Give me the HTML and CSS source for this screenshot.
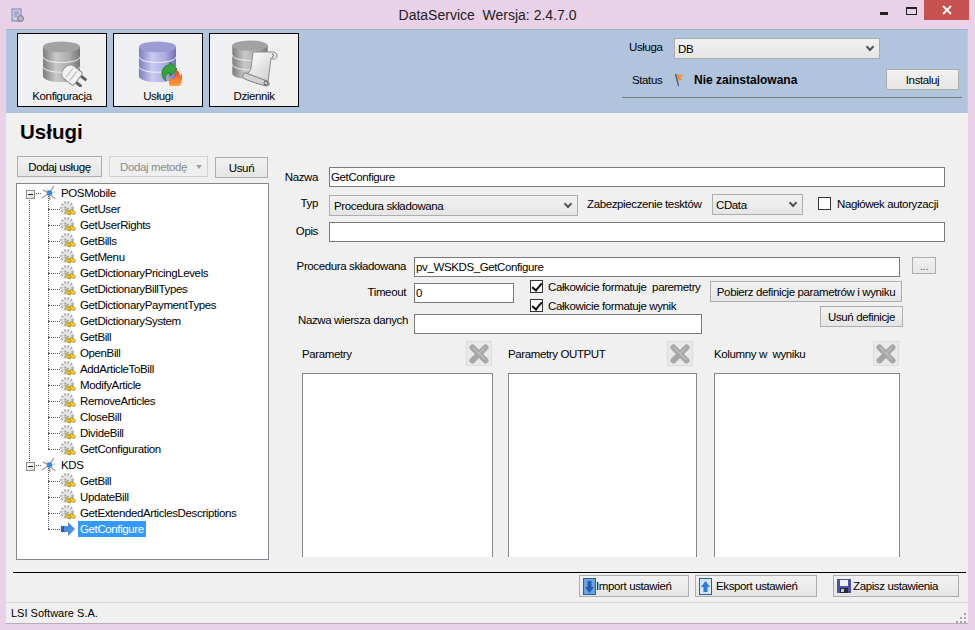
FILE: index.html
```html
<!DOCTYPE html>
<html lang="pl">
<head>
    <meta charset="UTF-8">
    <title>DataService Wersja: 2.4.7.0</title>
    <link rel="stylesheet" href="styles.css">
</head>
<body>
    <svg class="defs" width="0" height="0">
        <defs>
            <linearGradient id="grey" x1="0" x2="1" y1="0" y2="0">
                <stop offset="0" stop-color="#7d7d7d"/>
                <stop offset=".35" stop-color="#c9c9c9"/>
                <stop offset=".7" stop-color="#adadad"/>
                <stop offset="1" stop-color="#767676"/>
            </linearGradient>
            <linearGradient id="violet" x1="0" x2="1" y1="0" y2="0">
                <stop offset="0" stop-color="#7c7cba"/>
                <stop offset=".35" stop-color="#cacaf0"/>
                <stop offset=".7" stop-color="#aeaee0"/>
                <stop offset="1" stop-color="#7272b2"/>
            </linearGradient>
            <linearGradient id="flame" x1="0" x2="0" y1="0" y2="1">
                <stop offset="0" stop-color="#e8401a"/>
                <stop offset="1" stop-color="#ffa23a"/>
            </linearGradient>
            <linearGradient id="paper" x1="0" x2="1" y1="0" y2="1">
                <stop offset="0" stop-color="#ffffff"/>
                <stop offset="1" stop-color="#c9c9c9"/>
            </linearGradient>
            <symbol id="db-grey" viewBox="0 0 40 44">
                <path d="M1 6v30c0 3.500 8 6 19 6s19-2.500 19-6V6z" fill="url(#grey)"/>
                <ellipse cx="20" cy="6" rx="19" ry="5.500" fill="#a2a2a2"/>
                <path d="M1 16c0 3.500 8 6 19 6s19-2.500 19-6M1 26c0 3.500 8 6 19 6s19-2.500 19-6" fill="none" stroke="#f0f0f0" stroke-width="1"/>
            </symbol>
            <symbol id="db-violet" viewBox="0 0 40 44">
                <path d="M1 6v30c0 3.500 8 6 19 6s19-2.500 19-6V6z" fill="url(#violet)"/>
                <ellipse cx="20" cy="6" rx="19" ry="5.500" fill="#9c9cd4"/>
                <path d="M1 16c0 3.500 8 6 19 6s19-2.500 19-6M1 26c0 3.500 8 6 19 6s19-2.500 19-6" fill="none" stroke="#f2f2fd" stroke-width="1"/>
            </symbol>
            <symbol id="gear" viewBox="0 0 16 16">
                <circle cx="7" cy="7" r="5.500" fill="none" stroke="#b0b0b0" stroke-width="3" stroke-dasharray="2 1.200"/>
                <circle cx="7" cy="7" r="4.500" fill="#e2e2e2"/>
                <path d="M4 6l5 2M4 8l3 1" stroke="#9d9d9d" stroke-width="1"/>
                <ellipse cx="8.500" cy="11.500" rx="3.200" ry="1.800" fill="#e9bf22" stroke="#9a7a18" stroke-width=".6" transform="rotate(35 8.500 11.500)"/>
                <ellipse cx="12.500" cy="11" rx="3.200" ry="1.800" fill="#f4cf32" stroke="#9a7a18" stroke-width=".6" transform="rotate(35 12.500 11)"/>
            </symbol>
            <symbol id="node" viewBox="0 0 16 16">
                <path d="M8 8L1 13M8 8L13 1M8 8L2 5M8 8l6 6M8 8l1 7" stroke="#a9a9a9" stroke-width="1.400" fill="none"/>
                <path d="M8 8L5 2M8 8l7-1" stroke="#d8d8d8" stroke-width="1"/>
                <circle cx="8.500" cy="8" r="2.800" fill="#2e8fe8"/>
            </symbol>
            <symbol id="x-icon" viewBox="0 0 20 20">
                <path d="M3.500 3.500l13 13M16.500 3.500l-13 13" fill="none" stroke="#a6a6a6" stroke-width="6" stroke-linecap="round"/>
                <path d="M4 3.500l12 12M16 3.500L10 9.500" fill="none" stroke="#bcbcbc" stroke-width="1.500" stroke-linecap="round"/>
            </symbol>
        </defs>
    </svg>

    <header class="titlebar">
        <svg class="app-icon" width="14" height="15" viewBox="0 0 14 15">
            <rect x="1" y="1" width="9" height="12" fill="#c9cbe6" stroke="#7e83ad"/>
            <path d="M3 4h5M3 6h5M3 8h3" stroke="#7e83ad"/>
            <circle cx="9.500" cy="10.500" r="3" fill="#b4b6c4" stroke="#72758c"/>
        </svg>
        <div class="app-title">DataService &nbsp;Wersja: 2.4.7.0</div>
        <div class="win-controls">
            <span class="win-min"></span>
            <span class="win-max"></span>
            <span class="win-close">
                <svg width="10" height="10" viewBox="0 0 10 10"><path d="M1 1l8 8M9 1l-8 8" stroke="#fff" stroke-width="2"/></svg>
            </span>
        </div>
    </header>

    <div class="window">
        <section class="toolbar">
            <div class="tool-buttons">
                <button class="tool">
                    <svg width="60" height="50" viewBox="0 0 60 50">
                        <use href="#db-grey" x="10" y="4" width="39" height="43"/>
                        <g transform="rotate(38 39 37)">
                            <rect x="46" y="31" width="9" height="3" rx="1" fill="#5f5f5f"/>
                            <rect x="46" y="39" width="9" height="3" rx="1" fill="#5f5f5f"/>
                            <path d="M30 37c0-5 3-8 7-8h9c1 0 2 1 2 2v12c0 1-1 2-2 2h-9c-4 0-7-3-7-8z" fill="#f2f2f2" stroke="#8f8f8f"/>
                            <path d="M37 31v12M42 31v12" stroke="#c2c2c2" stroke-width="1.200"/>
                        </g>
                    </svg>
                    <span>Konfiguracja</span>
                </button>
                <button class="tool">
                    <svg width="60" height="50" viewBox="0 0 60 50">
                        <use href="#db-violet" x="10" y="4" width="39" height="43"/>
                        <path d="M42 49c-2-3-1-7 2-9 0 2 1 2 2 2 2-2 3-6 1-10 4 2 5 5 5 7 1-1 1-2 1-3 2 4 1 9-1 13z" fill="url(#flame)"/>
                        <path d="M38 44c-4-3-5-8-3-12 2-3 4-4 7-4v-3l7 7-7 7v-3c-2 0-3 1-4 2-1 2-1 4 0 6z" fill="#35a53a" stroke="#1a6f24" stroke-width=".8"/>
                    </svg>
                    <span>Usługi</span>
                </button>
                <button class="tool">
                    <svg width="60" height="50" viewBox="0 0 60 50">
                        <use href="#db-grey" x="7" y="3" width="38" height="41"/>
                        <path d="M29 15h20c3 0 4 2 4 4s-2 4-4 3l-2-1-3 24-22-8c3-1 4-3 5-6z" fill="url(#paper)" stroke="#8c8c8c"/>
                        <path d="M48 17c2 0 2 3 0 3" fill="none" stroke="#555"/>
                        <path d="M22 36l21 8c3 1 3 5 0 5-1 0-16-4-22-7-4-2-2-7 1-6z" fill="#d4d4d4" stroke="#7a7a7a"/>
                        <circle cx="42" cy="46" r="2" fill="none" stroke="#555"/>
                    </svg>
                    <span>Dziennik</span>
                </button>
            </div>
            <div class="service-panel">
                <div class="service-row">
                    <label class="service-label">Usługa</label>
                    <div class="combo combo-service">DB<i class="chevron"></i></div>
                </div>
                <div class="status-row">
                    <span class="status-label">Status</span>
                    <svg class="flag" width="10" height="13" viewBox="0 0 10 13">
                        <path d="M1 1l9 1-3 2 1 3-5 1z" fill="#e8954a"/>
                        <path d="M1.500 1l3 12" stroke="#4d5a78" stroke-width="1.300"/>
                    </svg>
                    <strong class="status-value">Nie zainstalowana</strong>
                    <button class="btn btn-install">Instaluj</button>
                </div>
                <div class="service-rule"></div>
            </div>
        </section>

        <main class="content">
            <h1>Usługi</h1>
            <div class="columns">
                <aside class="side">
                    <div class="side-buttons">
                        <button class="btn btn-add">Dodaj usługę</button>
                        <button class="btn btn-method" disabled>Dodaj metodę<i class="caret"></i></button>
                        <button class="btn btn-remove">Usuń</button>
                    </div>
                    <div class="tree">
                        <div class="tree-group">
                            <div class="node root"><i class="plus"></i><svg class="ico"><use href="#node"/></svg><span>POSMobile</span></div>
                            <div class="node"><svg class="ico"><use href="#gear"/></svg><span>GetUser</span></div>
                            <div class="node"><svg class="ico"><use href="#gear"/></svg><span>GetUserRights</span></div>
                            <div class="node"><svg class="ico"><use href="#gear"/></svg><span>GetBills</span></div>
                            <div class="node"><svg class="ico"><use href="#gear"/></svg><span>GetMenu</span></div>
                            <div class="node"><svg class="ico"><use href="#gear"/></svg><span>GetDictionaryPricingLevels</span></div>
                            <div class="node"><svg class="ico"><use href="#gear"/></svg><span>GetDictionaryBillTypes</span></div>
                            <div class="node"><svg class="ico"><use href="#gear"/></svg><span>GetDictionaryPaymentTypes</span></div>
                            <div class="node"><svg class="ico"><use href="#gear"/></svg><span>GetDictionarySystem</span></div>
                            <div class="node"><svg class="ico"><use href="#gear"/></svg><span>GetBill</span></div>
                            <div class="node"><svg class="ico"><use href="#gear"/></svg><span>OpenBill</span></div>
                            <div class="node"><svg class="ico"><use href="#gear"/></svg><span>AddArticleToBill</span></div>
                            <div class="node"><svg class="ico"><use href="#gear"/></svg><span>ModifyArticle</span></div>
                            <div class="node"><svg class="ico"><use href="#gear"/></svg><span>RemoveArticles</span></div>
                            <div class="node"><svg class="ico"><use href="#gear"/></svg><span>CloseBill</span></div>
                            <div class="node"><svg class="ico"><use href="#gear"/></svg><span>DivideBill</span></div>
                            <div class="node last"><svg class="ico"><use href="#gear"/></svg><span>GetConfiguration</span></div>
                        </div>
                        <div class="tree-group group-last">
                            <div class="node root"><i class="plus"></i><svg class="ico"><use href="#node"/></svg><span>KDS</span></div>
                            <div class="node"><svg class="ico"><use href="#gear"/></svg><span>GetBill</span></div>
                            <div class="node"><svg class="ico"><use href="#gear"/></svg><span>UpdateBill</span></div>
                            <div class="node"><svg class="ico"><use href="#gear"/></svg><span>GetExtendedArticlesDescriptions</span></div>
                            <div class="node last selected">
                                <svg class="ico" viewBox="0 0 16 16"><path d="M1 5h7V1l7 7-7 7v-4H1z" fill="#4a8fe0"/><path d="M1 5h3v6H1z" fill="#1f5fb4"/></svg>
                                <span>GetConfigure</span>
                            </div>
                        </div>
                    </div>
                </aside>

                <section class="form">
                    <div class="row row-name">
                        <label class="lbl lbl-name">Nazwa</label>
                        <input class="field field-wide" value="GetConfigure">
                    </div>
                    <div class="row row-type">
                        <label class="lbl lbl-name">Typ</label>
                        <div class="combo combo-type">Procedura składowana<i class="chevron"></i></div>
                        <label class="lbl-security">Zabezpieczenie tesktów</label>
                        <div class="combo combo-cdata">CData<i class="chevron"></i></div>
                        <i class="check check-auth"></i>
                        <label class="lbl-auth">Nagłówek autoryzacji</label>
                    </div>
                    <div class="row row-desc">
                        <label class="lbl lbl-name">Opis</label>
                        <input class="field field-wide">
                    </div>

                    <div class="row row-proc">
                        <label class="lbl lbl-long">Procedura składowana</label>
                        <input class="field field-proc" value="pv_WSKDS_GetConfigure">
                        <button class="btn btn-dots">...</button>
                    </div>

                    <div class="def-grid">
                        <label class="lbl lbl-long lbl-timeout">Timeout</label>
                        <input class="field field-timeout" value="0">
                        <div class="checks">
                            <div class="check-row"><i class="check on"></i><span>Całkowicie formatuje &nbsp;paremetry</span></div>
                            <div class="check-row"><i class="check on"></i><span>Całkowicie formatuje wynik</span></div>
                        </div>
                        <div class="def-buttons">
                            <button class="btn btn-fetch">Pobierz definicje parametrów i wyniku</button>
                            <button class="btn btn-clear">Usuń definicje</button>
                        </div>
                        <label class="lbl lbl-rowname">Nazwa wiersza danych</label>
                        <input class="field field-rowname">
                    </div>

                    <div class="lists">
                        <div class="list-col col-params">
                            <div class="list-head"><span>Parametry</span><button class="x-btn"><svg width="20" height="20"><use href="#x-icon"/></svg></button></div>
                            <div class="listbox"></div>
                        </div>
                        <div class="list-col col-output">
                            <div class="list-head"><span>Parametry OUTPUT</span><button class="x-btn"><svg width="20" height="20"><use href="#x-icon"/></svg></button></div>
                            <div class="listbox"></div>
                        </div>
                        <div class="list-col col-result">
                            <div class="list-head"><span>Kolumny w &nbsp;wyniku</span><button class="x-btn"><svg width="20" height="20"><use href="#x-icon"/></svg></button></div>
                            <div class="listbox"></div>
                        </div>
                    </div>
                </section>
            </div>
        </main>

        <div class="actions">
            <button class="btn btn-action btn-import">
                <svg width="13" height="17" viewBox="0 0 13 17"><rect x=".5" y=".5" width="12" height="16" fill="#6ba2e2" stroke="#2d5ea5"/><path d="M4.500 3h4v6H11l-4.500 6L2 9h2.500z" fill="#1f5bb5"/></svg>
                <span>Import ustawień</span>
            </button>
            <button class="btn btn-action btn-export">
                <svg width="13" height="17" viewBox="0 0 13 17"><rect x=".5" y=".5" width="12" height="16" fill="#d5e4f6" stroke="#2d5ea5"/><path d="M6.500 3L11 9H8.500v5h-4V9H2z" fill="#2f7bd0"/></svg>
                <span>Eksport ustawień</span>
            </button>
            <button class="btn btn-action btn-save">
                <svg width="14" height="14" viewBox="0 0 14 14"><rect width="14" height="14" fill="#4a4fa8"/><rect x="3" y="1" width="8" height="6" fill="#eef0fa"/><rect x="3" y="9" width="8" height="5" fill="#2a2a35"/><rect x="4" y="10" width="3" height="3" fill="#c9c9d4"/></svg>
                <span>Zapisz ustawienia</span>
            </button>
        </div>

        <footer class="statusbar">
            <span>LSI Software S.A.</span>
            <svg class="grip" width="11" height="11" viewBox="0 0 11 11"><path d="M9 1h2v2H9zM5 5h2v2H5zM9 5h2v2H9zM1 9h2v2H1zM5 9h2v2H5zM9 9h2v2H9z" fill="#a5a5a5"/></svg>
        </footer>
    </div>
</body>
</html>
```

FILE: styles.css
```css
* {
    box-sizing: border-box;
}
html, body {
    height: 100%;
}
body {
    margin: 0;
    width: 975px;
    height: 630px;
    overflow: hidden;
    background-color: #e9d1e8;
    font-family: "Liberation Sans", Arial, sans-serif;
    font-size: 11.5px;
    letter-spacing: -0.38px;
    color: #000;
    display: flex;
    flex-direction: column;
}
.defs {
    display: block;
    height: 0;
}
button {
    font: inherit;
    letter-spacing: inherit;
    color: inherit;
    padding: 0;
    white-space: nowrap;
}
label {
    display: block;
}
i {
    display: block;
}

/* title bar */
.titlebar {
    height: 29px;
    flex: none;
    display: flex;
    position: relative;
}
.app-icon {
    margin: 8px 0 0 11px;
}
.app-title {
    position: absolute;
    left: 0;
    right: 0;
    top: 7px;
    text-align: center;
    font-size: 14px;
    letter-spacing: 0;
    color: #222;
}
.win-controls {
    margin-left: auto;
    display: flex;
    align-items: flex-start;
    margin-right: 6px;
    position: relative;
}
.win-min {
    width: 8px;
    height: 3px;
    background-color: #222;
    margin: 12px 18px 0 0;
}
.win-max {
    width: 11px;
    height: 8px;
    border: 1px solid #222;
    border-top-width: 2px;
    margin: 7px 7px 0 0;
}
.win-close {
    width: 45px;
    height: 20px;
    background-color: #c75050;
    display: flex;
    align-items: center;
    justify-content: center;
}

.window {
    flex: 1;
    margin: 0 7px 6px 6px;
    background-color: #f0f0f0;
    display: flex;
    flex-direction: column;
    border-bottom: 1px solid #bfa9be;
}

/* toolbar */
.toolbar {
    height: 84px;
    flex: none;
    background-color: #b0c4de;
    display: flex;
    border-top: 1px solid #a5b3c8;
    border-right: 1px solid #c8c8c8;
}
.tool-buttons {
    display: flex;
    gap: 6px;
    padding: 3px 0 0 11px;
}
.tool {
    width: 90px;
    height: 74px;
    border: 1px solid #000;
    background-color: #f0f0f0;
    display: flex;
    flex-direction: column;
    align-items: center;
}
.tool svg {
    margin-top: 3px;
}
.tool span {
    margin-top: 3px;
}
.service-panel {
    margin-left: auto;
    width: 340px;
    margin-right: 5px;
    padding-top: 8px;
}
.service-row {
    display: flex;
    align-items: center;
}
.service-label {
    width: 52px;
    padding-left: 7px;
    margin-top: -3px;
}
.combo {
    height: 21px;
    border: 1px solid #adadad;
    background: linear-gradient(#f2f2f2, #e5e5e5);
    display: flex;
    align-items: center;
    padding-left: 3px;
    position: relative;
}
.combo-service {
    width: 206px;
}
.chevron {
    position: absolute;
    right: 6px;
    top: 5px;
    width: 6px;
    height: 6px;
    border-right: 2px solid #555;
    border-bottom: 2px solid #555;
    transform: rotate(45deg);
}
.status-row {
    display: flex;
    align-items: center;
    height: 21px;
    margin-top: 10px;
}
.status-label {
    width: 52px;
    padding-left: 10px;
}
.flag {
    flex: none;
}
.status-value {
    margin-left: 10px;
    font-size: 12px;
    letter-spacing: 0;
}
.btn {
    background: linear-gradient(#f2f2f2, #e5e5e5);
    border: 1px solid #adadad;
    height: 21px;
    display: block;
}
.btn-install {
    margin-left: auto;
    width: 73px;
    margin-right: 3px;
}
.service-rule {
    height: 1px;
    background-color: #7d7d7d;
    margin-top: 7px;
}

/* main */
.content {
    flex: 1;
    min-height: 0;
    overflow: hidden;
    padding: 0 0 0 10px;
}
h1 {
    margin: 7px 0 0 4px;
    font-size: 20.5px;
    line-height: 24px;
    font-weight: bold;
    letter-spacing: 0;
}
.columns {
    display: flex;
    margin-top: 12px;
}
.side {
    width: 253px;
    flex: none;
}
.side-buttons {
    display: flex;
    align-items: flex-start;
    padding-left: 1px;
    height: 27px;
}
.btn-add {
    width: 85px;
}
.btn-method {
    width: 99px;
    margin-left: 7px;
    color: #8a8a8a;
    border-color: #d2d2d2;
    background: #efefef;
    text-align: left;
    padding-left: 10px;
    position: relative;
}
.caret {
    position: absolute;
    right: 5px;
    top: 8px;
    border: 3.5px solid transparent;
    border-top: 4px solid #a0a0a0;
}
.btn-remove {
    width: 53px;
    margin: 1px 0 0 7px;
}

/* tree */
.tree {
    height: 377px;
    background-color: #fff;
    border: 1px solid #828790;
    padding-top: 1px;
    position: relative;
}
.tree-group {
    position: relative;
}
.tree-group::before {
    content: "";
    position: absolute;
    left: 12px;
    top: 8px;
    bottom: -8px;
    border-left: 1px dotted #555;
}
.group-last::before {
    display: none;
}
.node {
    height: 16px;
    display: flex;
    align-items: center;
    padding-left: 43px;
    position: relative;
    white-space: nowrap;
}
.node::before {
    content: "";
    position: absolute;
    left: 31px;
    top: -8px;
    height: 16px;
    border-left: 1px dotted #555;
}
.node::after {
    content: "";
    position: absolute;
    left: 31px;
    top: 8px;
    width: 12px;
    border-top: 1px dotted #555;
}
.node .ico {
    width: 16px;
    height: 16px;
    flex: none;
}
.node span {
    margin-left: 2px;
    padding: 0 2px;
    line-height: 16px;
}
.root {
    padding-left: 24px;
}
.root::before {
    display: none;
}
.root::after {
    left: 12px;
}
.root .ico {
    position: relative;
    z-index: 1;
}
.root span {
    margin-left: 2px;
}
.plus {
    position: absolute;
    z-index: 1;
    left: 9px;
    top: 5px;
    width: 9px;
    height: 9px;
    border: 1px solid #8f8f8f;
    background: linear-gradient(135deg, #fff, #d9d9d9);
}
.plus::after {
    content: "";
    position: absolute;
    left: 1px;
    top: 3px;
    width: 5px;
    height: 1px;
    background-color: #222;
}
.selected span {
    background-color: #3399ff;
    color: #fff;
}

/* form */
.form {
    flex: 1;
    margin-left: 14px;
    padding-top: 11px;
}
.row {
    display: flex;
    align-items: flex-start;
}
.field {
    height: 20px;
    border: 1px solid #7a7a7a;
    background-color: #fff;
    font: inherit;
    letter-spacing: inherit;
    color: #000;
    padding: 0 1px;
    display: block;
    outline: none;
}
.lbl {
    text-align: right;
    flex: none;
}
.lbl-name {
    width: 35px;
    margin-right: 11px;
    padding-top: 3px;
}
.field-wide {
    width: 616px;
}
.row-name .lbl {
    padding-top: 4px;
}
.row-type {
    margin-top: 8px;
    height: 21px;
}
.row-type .lbl-name {
    padding-top: 2px;
}
.combo-type {
    width: 249px;
    padding-left: 4px;
}
.lbl-security {
    margin-left: 9px;
    padding-top: 3px;
    width: 125px;
    flex: none;
    white-space: nowrap;
}
.combo-cdata {
    width: 91px;
    margin-top: -1px;
}
.check {
    width: 13px;
    height: 13px;
    border: 1px solid #333;
    background-color: #fff;
    flex: none;
    position: relative;
}
.check.on::after {
    content: "";
    position: absolute;
    left: 3px;
    top: 0;
    width: 4px;
    height: 8px;
    border-right: 2px solid #111;
    border-bottom: 2px solid #111;
    transform: rotate(40deg);
}
.check-auth {
    margin: 2px 0 0 15px;
}
.lbl-auth {
    margin-left: 6px;
    padding-top: 3px;
    white-space: nowrap;
}
.row-desc {
    margin-top: 6px;
}
.row-proc {
    margin-top: 15px;
}
.lbl-long {
    width: 123px;
    margin-right: 8px;
    white-space: nowrap;
    padding-top: 3px;
}
.field-proc {
    width: 486px;
}
.btn-dots {
    width: 24px;
    height: 17px;
    margin-left: 12px;
    color: #666;
}

/* timeout block */
.def-grid {
    display: grid;
    grid-template-columns: 131px 116px 180px auto;
    grid-template-rows: 34px 21px;
    margin-top: 3px;
}
.lbl-timeout {
    grid-column: 1;
    grid-row: 1;
    padding-top: 6px;
}
.field-timeout {
    grid-column: 2;
    grid-row: 1;
    width: 100px;
    margin-top: 3px;
}
.checks {
    grid-column: 3;
    grid-row: 1;
    display: flex;
    flex-direction: column;
    gap: 6px;
}
.check-row {
    display: flex;
    align-items: center;
    gap: 5px;
    height: 13px;
    white-space: nowrap;
}
.def-buttons {
    grid-column: 4;
    grid-row: 1 / 3;
    padding-top: 1px;
}
.btn-fetch {
    width: 192px;
}
.btn-clear {
    width: 83px;
    margin: 4px 0 0 110px;
}
.lbl-rowname {
    grid-column: 1;
    grid-row: 2;
    width: 125px;
    white-space: nowrap;
}
.field-rowname {
    grid-column: 2 / 4;
    grid-row: 2;
    width: 288px;
}

/* lists */
.lists {
    display: flex;
    margin-top: 6px;
    margin-left: 19px;
}
.list-col {
    flex: none;
}
.col-params {
    width: 206px;
}
.col-output {
    width: 206px;
}
.col-result {
    width: 186px;
}
.list-head {
    height: 32px;
    display: flex;
    align-items: flex-start;
    justify-content: space-between;
}
.list-head span {
    margin-top: 7px;
}
.x-btn {
    width: 26px;
    height: 25px;
    border: 1px solid #dcdcdc;
    background-color: #e9e9e9;
    display: flex;
    align-items: center;
    justify-content: center;
}
.listbox {
    height: 184px;
    background-color: #fff;
    border: 1px solid #828790;
    border-bottom: none;
}
.col-params .x-btn {
    margin-right: 16px;
}
.col-params .listbox {
    width: 191px;
}
.col-output .x-btn {
    margin-right: 21px;
}
.col-output .listbox {
    width: 189px;
}
.col-result .x-btn {
    margin-right: 1px;
}
.col-result .listbox {
    width: 186px;
}

/* bottom */
.actions {
    flex: none;
    height: 30px;
    margin: 0 2px 0 7px;
    border-top: 1px solid #000;
    padding-top: 2px;
    display: flex;
    align-items: flex-start;
}
.btn-action {
    height: 22px;
    display: flex;
    align-items: center;
    padding-left: 3px;
}
.btn-import {
    width: 110px;
    margin-left: 566px;
}
.btn-export {
    width: 122px;
    margin-left: 6px;
}
.btn-export span {
    margin-left: 4px;
}
.btn-save {
    width: 126px;
    margin-left: 16px;
}
.btn-save span {
    margin-left: 2px;
}
.statusbar {
    flex: none;
    height: 21px;
    border-top: 1px solid #d8d8d8;
    display: flex;
    align-items: center;
    padding: 0 2px 0 5px;
    font-size: 11px;
    letter-spacing: 0;
    position: relative;
}
.grip {
    margin-left: auto;
    margin-top: 8px;
}
```
